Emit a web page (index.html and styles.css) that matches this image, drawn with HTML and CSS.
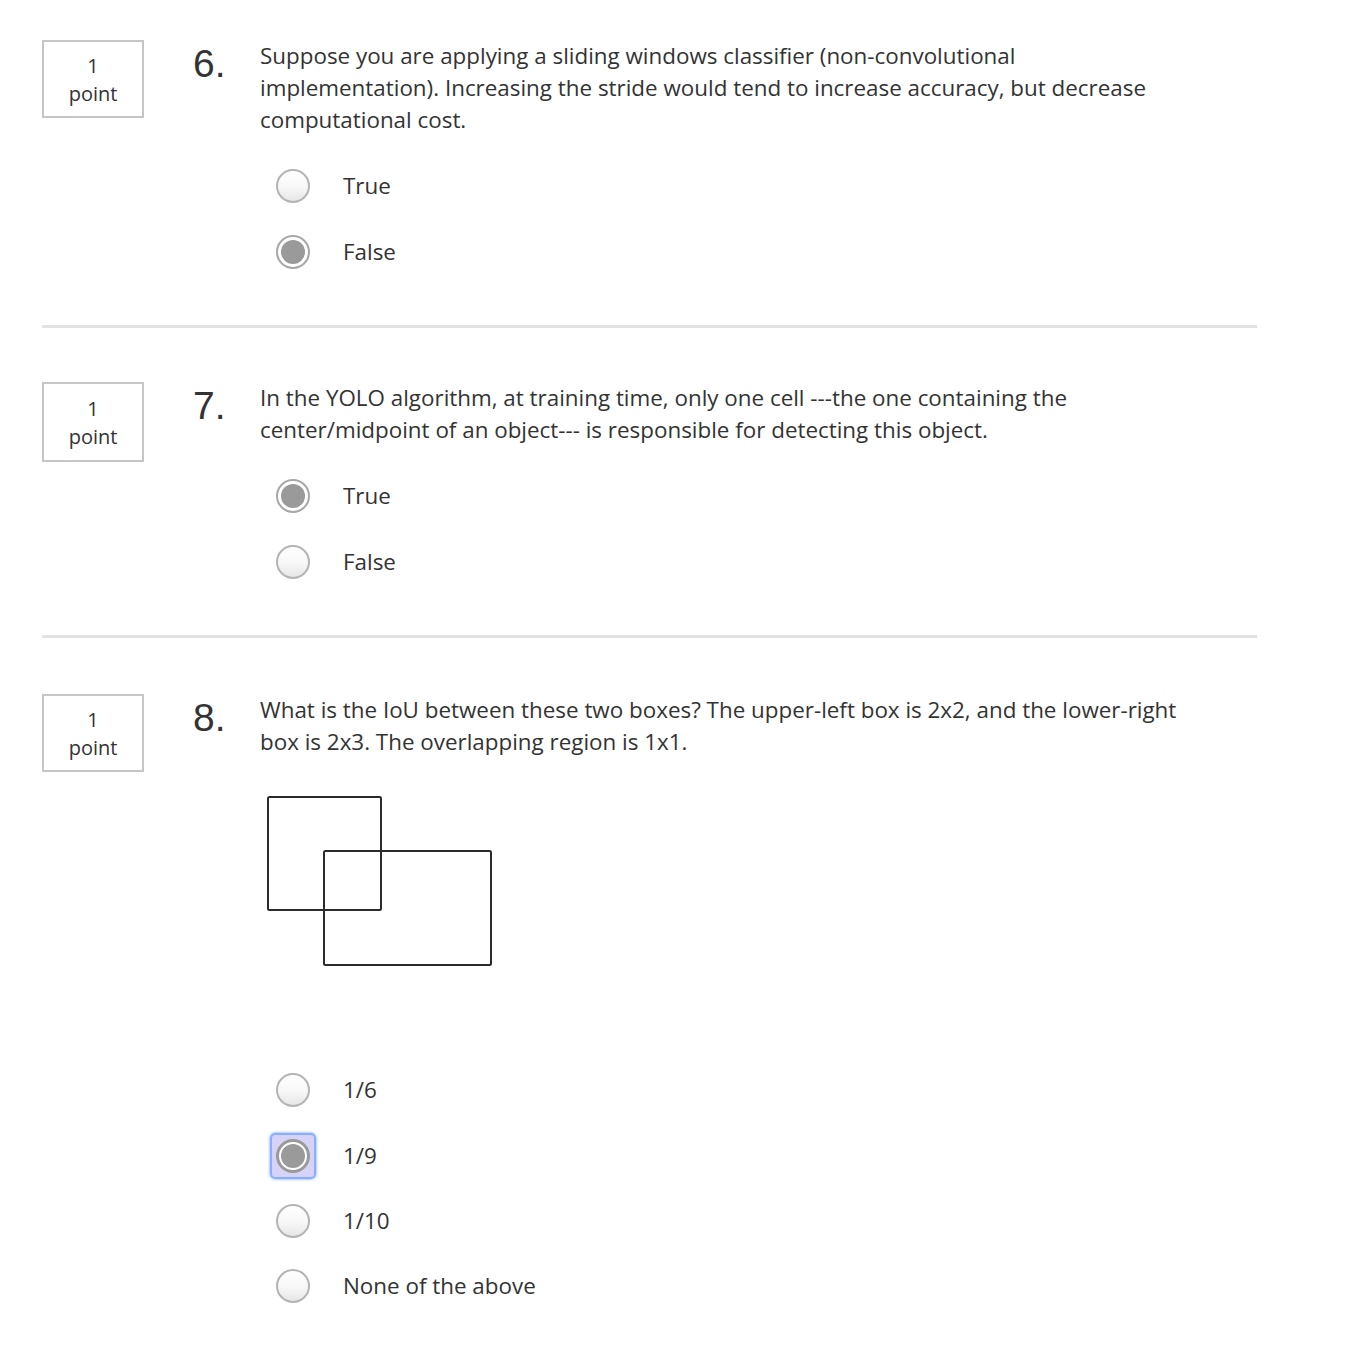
FILE: index.html
```html
<!DOCTYPE html>
<html>
<head>
<meta charset="utf-8">
<link rel="stylesheet" href="styles.css">
</head>
<body>
<div class="quiz">
  <div class="question">
    <div class="points">1<br>point</div>
    <div class="num">6.</div>
    <div class="body">
      <div class="prompt">Suppose you are applying a sliding windows classifier (non-convolutional implementation). Increasing the stride would tend to increase accuracy, but decrease computational cost.</div>
      <div class="options">
        <div class="option"><span class="radio"></span><span class="label">True</span></div>
        <div class="option"><span class="radio checked"></span><span class="label">False</span></div>
      </div>
    </div>
  </div>
  <hr class="divider">
  <div class="question">
    <div class="points tall-box">1<br>point</div>
    <div class="num">7.</div>
    <div class="body">
      <div class="prompt">In the YOLO algorithm, at training time, only one cell ---the one containing the center/midpoint of an object--- is responsible for detecting this object.</div>
      <div class="options">
        <div class="option"><span class="radio checked"></span><span class="label">True</span></div>
        <div class="option"><span class="radio"></span><span class="label">False</span></div>
      </div>
    </div>
  </div>
  <hr class="divider wide">
  <div class="question">
    <div class="points">1<br>point</div>
    <div class="num">8.</div>
    <div class="body">
      <div class="prompt">What is the IoU between these two boxes? The upper-left box is 2x2, and the lower-right box is 2x3. The overlapping region is 1x1.</div>
      <svg class="figure" width="232" height="176" viewBox="0 0 232 176">
        <rect x="3" y="3" width="113" height="113" rx="1.5" fill="none" stroke="#2b2b2b" stroke-width="2"/>
        <rect x="59" y="57" width="167" height="114" rx="1.5" fill="none" stroke="#2b2b2b" stroke-width="2"/>
      </svg>
      <div class="options tall">
        <div class="option"><span class="radio"></span><span class="label">1/6</span></div>
        <div class="option"><span class="focus-ring"><span class="radio checked focused"></span></span><span class="label">1/9</span></div>
        <div class="option short"><span class="radio"></span><span class="label">1/10</span></div>
        <div class="option"><span class="radio"></span><span class="label">None of the above</span></div>
      </div>
    </div>
  </div>
</div>
</body>
</html>
```

FILE: styles.css
```css
html, body {
  margin: 0;
  padding: 0;
}

body {
  font-family: "Open Sans", "Liberation Sans", sans-serif;
  color: #333333;
}

.quiz {
  width: 1215px;
  padding: 40px 0 40px 42px;
}

.question {
  display: flex;
  align-items: flex-start;
}

.points {
  box-sizing: border-box;
  width: 102px;
  flex: none;
  border: 2px solid #c6c6c6;
  padding: 10px 0 8px;
  text-align: center;
  font-size: 20px;
  line-height: 28px;
  color: #333333;
}

.points.tall-box {
  padding: 11px 0 9px;
}

.num {
  flex: none;
  width: 67px;
  margin-left: 49px;
  margin-top: 4px;
  font-family: "Liberation Sans", Arial, sans-serif;
  font-size: 39px;
  line-height: 40px;
  color: #333333;
}

.body {
  flex: none;
  width: 922px;
}

.prompt {
  font-size: 22.4px;
  line-height: 32px;
  color: #333333;
}

.options {
  margin-top: 17px;
  display: flex;
  flex-direction: column;
}

.option {
  height: 66px;
  display: flex;
  align-items: center;
  padding-left: 16px;
}

.option.short {
  height: 64px;
}

.radio {
  position: relative;
  box-sizing: border-box;
  width: 34px;
  height: 34px;
  flex: none;
  border-radius: 50%;
  border: 2px solid #b4b4b4;
  background: linear-gradient(#ffffff, #f7f7f7 55%, #e6e6e6);
}

.radio.checked {
  background: #ffffff;
  border-color: #a8a8a8;
}

.radio.checked::after {
  content: "";
  position: absolute;
  left: 3px;
  top: 3px;
  right: 3px;
  bottom: 3px;
  border-radius: 50%;
  background: #9a9a9a;
}

.focus-ring {
  flex: none;
  display: flex;
  margin: -6px;
  padding: 4px;
  border-radius: 5px;
  border: 2px solid #86b0ff;
  background: rgba(175, 165, 240, 0.5);
  box-shadow: 0 0 3px rgba(90, 140, 255, 0.9);
}

.radio.focused {
  border-color: #9a9a9a;
  border-width: 3px;
}

.radio.focused::after {
  left: 2px;
  top: 2px;
  right: 2px;
  bottom: 2px;
}

.label {
  margin-left: 33px;
  font-size: 22.4px;
  line-height: 32px;
  color: #333333;
}

.figure {
  display: block;
  margin: 36px 0 0 5px;
}

.options.tall {
  margin-top: 87px;
}

.divider {
  margin: 40px 0 54px;
  border: none;
  height: 3px;
  background: #e2e2e2;
}

.divider.wide {
  margin-bottom: 56px;
}
```
